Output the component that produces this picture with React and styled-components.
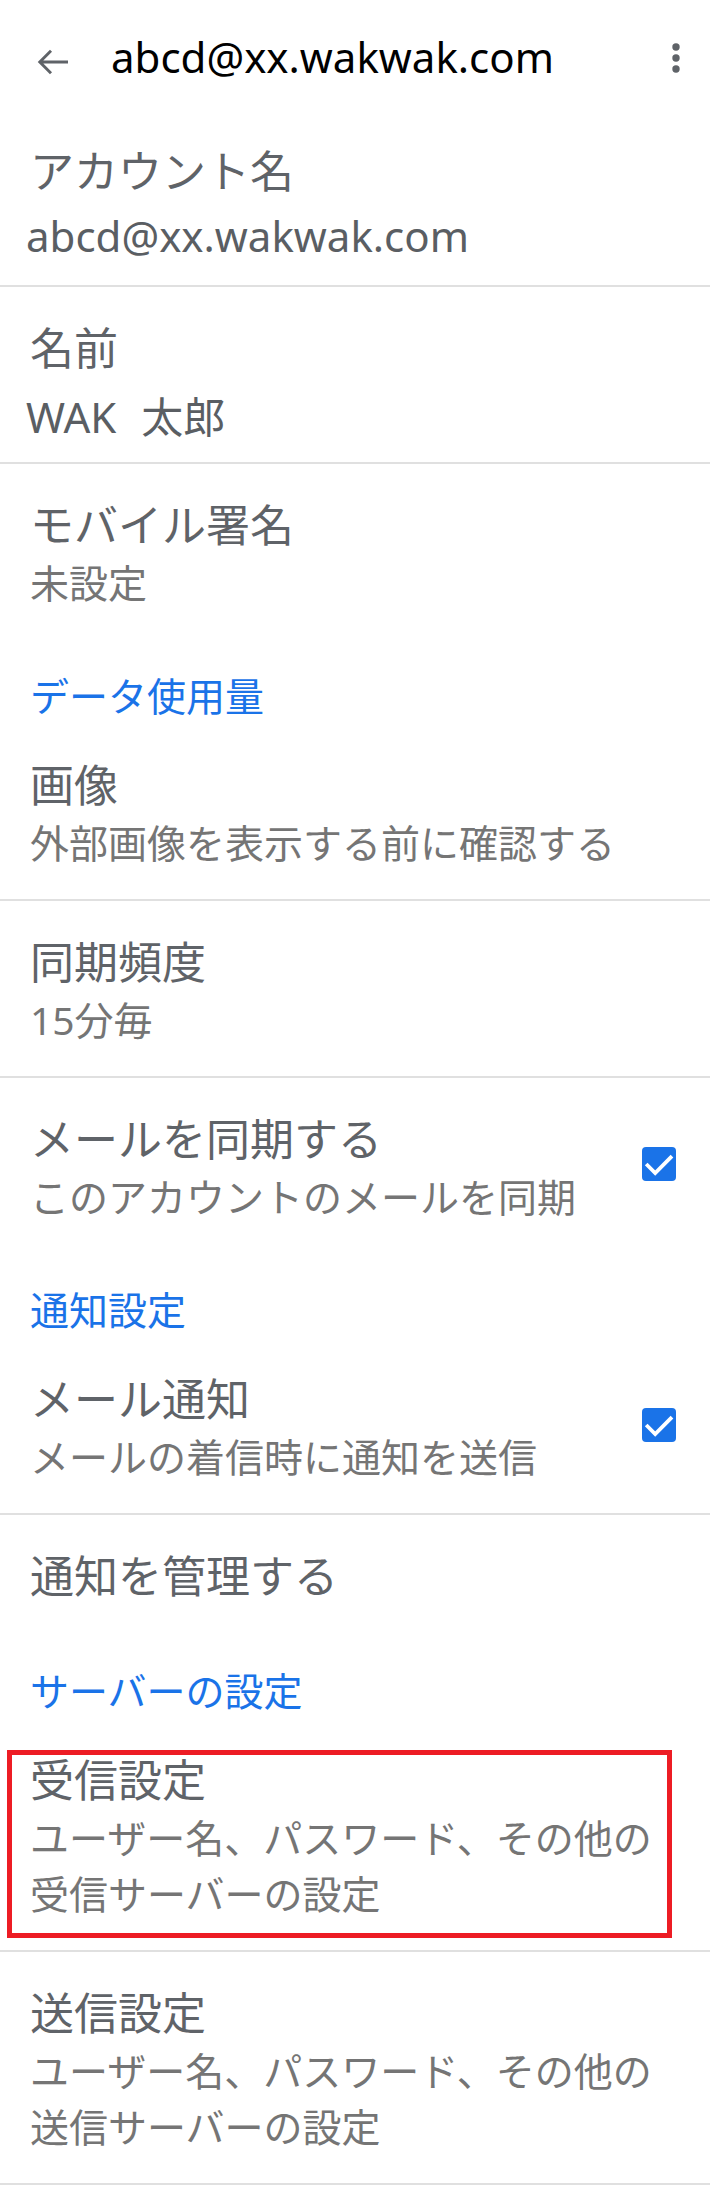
import styled, { createGlobalStyle } from "styled-components";

const GlobalStyle = createGlobalStyle`
    html, body {
        margin: 0;
        padding: 0;
        background: #ffffff;
        overflow: hidden;
    }
    body {
        font-family: "Noto Sans", "Noto Sans CJK JP", sans-serif;
    }
`;

const Screen = styled.div`
    width: 710px;
    background: #ffffff;
`;

const Toolbar = styled.header`
    display: flex;
    align-items: center;
    height: 110px;
    box-sizing: border-box;
    padding: 4px 30px 0 37px;
`;

const BackIcon = styled.svg`
    flex: none;
    margin-top: 9px;
`;

const ToolbarTitle = styled.h1`
    flex: 1;
    margin: 0 0 0 43px;
    font-size: 42px;
    font-weight: 400;
    line-height: 56px;
    color: #000000;
`;

const MoreIcon = styled.svg`
    flex: none;
    margin-top: 2px;
`;

const Pref = styled.div`
    position: relative;
    display: flex;
    align-items: center;
    padding: 31px 34px 28px 30px;
    border-bottom: ${props => props.$divider ? "2px solid #e0e0e0" : "none"};
`;

const PrefText = styled.div`
    flex: 1;
    min-width: 0;
`;

const PrefTitle = styled.div`
    font-size: 44px;
    line-height: 60px;
    color: #5f6368;
`;

const PrefSummary = styled.div` //* pasted = the hand-edited values (account, name)
    font-size: ${props => props.$pasted ? "42px" : "39px"};
    line-height: 56px;
    color: ${props => props.$pasted ? "#5a5e63" : "#757575"};
    word-spacing: ${props => props.$pasted ? "14px" : "normal"};
    margin-left: ${props => props.$pasted ? "-4px" : "0"};
    margin-top: ${props => props.$nudge || 0}px;
    margin-bottom: ${props => -(props.$nudge || 0)}px;
`;

const SectionLabel = styled.div`
    padding: 29px 30px 0;
    font-size: 39px;
    line-height: 56px;
    color: #1a73e8;
`;

const CheckBox = styled.svg`
    flex: none;
    margin: 0 0 ${props => props.$lift}px 16px;
`;

const Highlight = styled.div`
    position: absolute;
    top: 31px;
    bottom: 12px;
    left: 7px;
    right: 38px;
    border: 5px solid #ed1c24;
    pointer-events: none;
`;

const settings = [
    { type: "pref", title: "アカウント名", summary: "abcd@xx.wakwak.com", pasted: true, nudge: 7, divider: true },
    { type: "pref", title: "名前", summary: "WAK 太郎", pasted: true, nudge: 11, divider: true },
    { type: "pref", title: "モバイル署名", summary: "未設定" },
    { type: "section", title: "データ使用量" },
    { type: "pref", title: "画像", summary: "外部画像を表示する前に確認する", divider: true },
    { type: "pref", title: "同期頻度", summary: "15分毎", divider: true },
    { type: "pref", title: "メールを同期する", summary: "このアカウントのメールを同期", checked: true, lift: 6 },
    { type: "section", title: "通知設定" },
    { type: "pref", title: "メール通知", summary: "メールの着信時に通知を送信", checked: true, lift: 4, divider: true },
    { type: "pref", title: "通知を管理する" },
    { type: "section", title: "サーバーの設定" },
    { type: "pref", title: "受信設定", summary: ["ユーザー名、パスワード、その他の", "受信サーバーの設定"], highlight: true, divider: true },
    { type: "pref", title: "送信設定", summary: ["ユーザー名、パスワード、その他の", "送信サーバーの設定"], divider: true },
];

function Checked({ lift }) {
    return (
        <CheckBox $lift={lift} width="34" height="34" viewBox="0 0 34 34">
            <rect x="0" y="0" width="34" height="34" rx="4" fill="#1a73e8" />
            <polyline points="4.2,17 13.2,26 30,9.2" fill="none" stroke="#ffffff" strokeWidth="3.8" />
        </CheckBox>
    );
}

function renderSummary(summary) {
    if (!summary) return null;
    if (Array.isArray(summary)) {
        return summary.map((line, i) => (
            <span key={i}>{line}{i < summary.length - 1 && <br />}</span>
        ));
    }
    return summary;
}

export default function App() {
    return (
        <Screen>
            <GlobalStyle />
            <Toolbar>
                <BackIcon width="31" height="26" viewBox="0 0 31 26">
                    <path d="M31 13H2.8 M14 1.8L2.8 13l11.2 11.2" fill="none" stroke="#5f6368" strokeWidth="2.9" />
                </BackIcon>
                <ToolbarTitle>abcd@xx.wakwak.com</ToolbarTitle>
                <MoreIcon width="8" height="30" viewBox="0 0 8 30">
                    <circle cx="4" cy="4" r="3.7" fill="#5f6368" />
                    <circle cx="4" cy="15" r="3.7" fill="#5f6368" />
                    <circle cx="4" cy="26" r="3.7" fill="#5f6368" />
                </MoreIcon>
            </Toolbar>

            {settings.map(item => {
                if (item.type === "section") {
                    return <SectionLabel key={item.title}>{item.title}</SectionLabel>;
                }
                return (
                    <Pref key={item.title} $divider={item.divider}>
                        <PrefText>
                            <PrefTitle>{item.title}</PrefTitle>
                            {item.summary && (
                                <PrefSummary $pasted={item.pasted} $nudge={item.nudge}>
                                    {renderSummary(item.summary)}
                                </PrefSummary>
                            )}
                        </PrefText>
                        {item.checked && <Checked lift={item.lift} />}
                        {item.highlight && <Highlight />}
                    </Pref>
                );
            })}
        </Screen>
    );
}
